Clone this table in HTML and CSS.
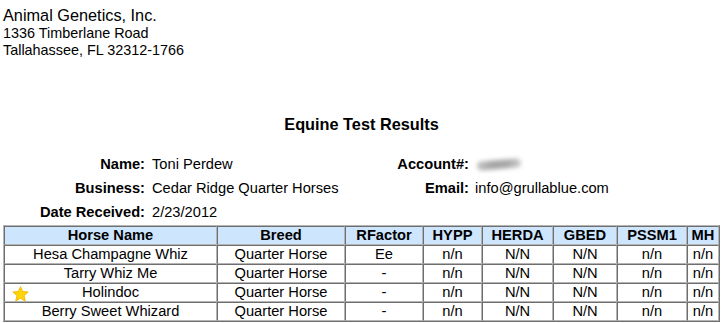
FILE: index.html
```html
<!DOCTYPE html>
<html>
<head>
<meta charset="utf-8">
<link rel="stylesheet" href="styles.css">
</head>
<body>
<div class="page">
  <div class="address">
    <div class="company">Animal Genetics, Inc.</div>
    <div class="line">1336 Timberlane Road</div>
    <div class="line">Tallahassee, FL 32312-1766</div>
  </div>

  <h1 class="title">Equine Test Results</h1>

  <div class="info">
    <div class="label">Name:</div>
    <div class="value">Toni Perdew</div>
    <div class="label label2">Account#:</div>
    <div class="value value2"><span class="redacted"></span></div>

    <div class="label">Business:</div>
    <div class="value">Cedar Ridge Quarter Horses</div>
    <div class="label label2">Email:</div>
    <div class="value value2">info@grullablue.com</div>

    <div class="label">Date Received:</div>
    <div class="value">2/23/2012</div>
    <div class="label label2"></div>
    <div class="value value2"></div>
  </div>

  <table class="results">
    <thead>
      <tr>
        <th class="c-name">Horse Name</th>
        <th class="c-breed">Breed</th>
        <th class="c-rf">RFactor</th>
        <th class="c-hypp">HYPP</th>
        <th class="c-herda">HERDA</th>
        <th class="c-gbed">GBED</th>
        <th class="c-pssm">PSSM1</th>
        <th class="c-mh">MH</th>
      </tr>
    </thead>
    <tbody>
      <tr>
        <td>Hesa Champagne Whiz</td>
        <td>Quarter Horse</td>
        <td>Ee</td>
        <td>n/n</td>
        <td>N/N</td>
        <td>N/N</td>
        <td>n/n</td>
        <td>n/n</td>
      </tr>
      <tr>
        <td>Tarry Whiz Me</td>
        <td>Quarter Horse</td>
        <td>-</td>
        <td>n/n</td>
        <td>N/N</td>
        <td>N/N</td>
        <td>n/n</td>
        <td>n/n</td>
      </tr>
      <tr>
        <td class="starred"><svg class="star" width="17" height="16" viewBox="0 0 16 15"><polygon points="8,0.6 10.1,5.2 15.2,5.6 11.3,9 12.5,14.2 8,11.5 3.5,14.2 4.7,9 0.8,5.6 5.9,5.2" fill="#ffd400" stroke="#f0b400" stroke-width="0.8" stroke-linejoin="round"/></svg>Holindoc</td>
        <td>Quarter Horse</td>
        <td>-</td>
        <td>n/n</td>
        <td>N/N</td>
        <td>N/N</td>
        <td>n/n</td>
        <td>n/n</td>
      </tr>
      <tr>
        <td>Berry Sweet Whizard</td>
        <td>Quarter Horse</td>
        <td>-</td>
        <td>n/n</td>
        <td>N/N</td>
        <td>N/N</td>
        <td>n/n</td>
        <td>n/n</td>
      </tr>
    </tbody>
  </table>
</div>
</body>
</html>
```

FILE: styles.css
```css
html, body {
  margin: 0;
  padding: 0;
  background: #ffffff;
}

body {
  font-family: "Liberation Sans", Arial, sans-serif;
  color: #000000;
}

.page {
  padding: 6px 3px 0 3px;
}

.company {
  font-size: 16.3px;
  line-height: 19px;
}

.line {
  font-size: 14.4px;
  line-height: 17px;
}

.title {
  margin: 56px 0 0 0;
  font-size: 16.3px;
  line-height: 19px;
  font-weight: bold;
  text-align: center;
}

.info {
  margin-top: 18px;
  display: grid;
  grid-template-columns: 142px 250px 74px 1fr;
  grid-auto-rows: 24px;
  font-size: 14.67px;
  line-height: 24px;
}

.label {
  font-weight: bold;
  text-align: right;
  white-space: nowrap;
}

.value {
  padding-left: 7px;
  white-space: nowrap;
}

.value2 {
  padding-left: 6px;
}

.redacted {
  display: inline-block;
  width: 44px;
  height: 9px;
  margin-left: 2px;
  vertical-align: 0px;
  background: linear-gradient(90deg, #c4c4c4 0%, #a4a4a4 35%, #a8a8a8 70%, #cfcfcf 100%);
  border-radius: 3px 5px 3px 5px;
  transform: skewY(-5deg);
  filter: blur(2px);
}

.results {
  margin-top: 1px;
  width: 717px;
  table-layout: fixed;
  border-collapse: separate;
  border-spacing: 0;
  border-style: solid;
  border-width: 1px;
  border-color: #b4b4b4 #6e6e6e #6e6e6e #b4b4b4;
  font-size: 14.67px;
}

.results th,
.results td {
  box-sizing: border-box;
  height: 19px;
  padding: 0;
  line-height: 17px;
  text-align: center;
  white-space: nowrap;
  overflow: hidden;
  border-style: solid;
  border-width: 1px;
  border-color: #6e6e6e #b4b4b4 #b4b4b4 #6e6e6e;
}

.results th {
  background: #cde6fd;
  font-weight: bold;
}

.c-name { width: 213px; }
.c-breed { width: 128px; }
.c-rf { width: 78px; }
.c-hypp { width: 59px; }
.c-herda { width: 71px; }
.c-gbed { width: 64px; }
.c-pssm { width: 70px; }
.c-mh { width: 32px; }

.starred {
  position: relative;
}

.star {
  position: absolute;
  left: 7px;
  top: 2px;
}
```
